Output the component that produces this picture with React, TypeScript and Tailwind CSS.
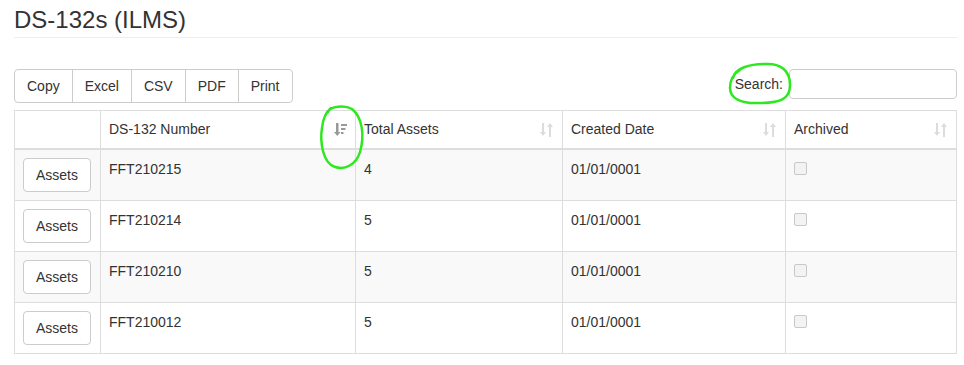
const rows = [
  { num: "FFT210215", total: "4", date: "01/01/0001" },
  { num: "FFT210214", total: "5", date: "01/01/0001" },
  { num: "FFT210210", total: "5", date: "01/01/0001" },
  { num: "FFT210012", total: "5", date: "01/01/0001" },
];

const SortBoth = () => (
  <svg width="13" height="14" viewBox="0 0 13 14" className="absolute right-[9px] top-[12px]">
    <g fill="#dcdcdc">
      <rect x="2" y="0" width="2" height="10" />
      <polygon points="0,9 6,9 3,13" />
      <rect x="9" y="3" width="2" height="11" />
      <polygon points="7,4 13,4 10,0" />
    </g>
  </svg>
);

const SortActive = () => (
  <svg width="13" height="14" viewBox="0 0 13 14" className="absolute right-[8px] top-[12px]">
    <g fill="#999">
      <rect x="2" y="0" width="2.5" height="10" />
      <polygon points="0,9 6.5,9 3.25,13" />
      <rect x="7" y="1" width="6" height="2" />
      <rect x="7" y="5" width="4.5" height="2" />
      <rect x="7" y="9" width="2.5" height="2" />
    </g>
  </svg>
);

// hand-drawn green marks that sit on top of the screenshot
const Marks = () => (
  <svg width="964" height="365" className="pointer-events-none absolute left-0 top-0">
    <g fill="none" stroke="#2ee81f" strokeWidth="2.5" strokeLinecap="round">
      <path d="M328 112 C330 106 345 105 352 109 C362 117 365 135 360 152 C356 165 345 170 335 167 C322 163 320 140 322 128 C323 118 326 112 331 108" />
      <path d="M733 78 C735 68 750 64 765 64 C780 63 790 70 790 85 C790 98 782 103 760 103 C740 104 730 98 730 88 C730 80 733 74 740 70" />
    </g>
  </svg>
);

const th = "relative border border-[#ddd] border-b-2 px-2 pt-2 pb-[9px] text-left font-normal";
const td = "border border-[#ddd] px-2 py-2 align-top";

export default function App() {
  return (
    <div className="relative min-h-[365px] bg-white pl-[14px] pr-[7px] text-[14px] leading-5 text-[#333]" style={{ fontFamily: '"Liberation Sans", Arial, sans-serif' }}>
      <h3 className="border-b border-[#eee] pt-[7px] pb-[4px] text-[24px] leading-[26px]">DS-132s (ILMS)</h3>

      <div className="mt-[31px] flex items-start justify-between">
        <div className="flex">
          {["Copy", "Excel", "CSV", "PDF", "Print"].map((b, i) => (
            <button
              key={b}
              className={
                "h-[34px] border border-[#ccc] bg-white px-3 text-[#333] " +
                (i === 0 ? "rounded-l " : "-ml-px ") +
                (i === 4 ? "rounded-r" : "")
              }
            >
              {b}
            </button>
          ))}
        </div>
        <label className="flex items-center gap-[6px]">
          <span>Search:</span>
          <input className="h-[30px] w-[168px] rounded border border-[#ccc] px-2 outline-none" />
        </label>
      </div>

      <table className="mt-[7px] w-full border-collapse">
        <thead>
          <tr>
            <th className={th + " w-[86px]"}></th>
            <th className={th + " w-[255px]"}>DS-132 Number<SortActive /></th>
            <th className={th + " w-[207px]"}>Total Assets<SortBoth /></th>
            <th className={th + " w-[223px]"}>Created Date<SortBoth /></th>
            <th className={th}>Archived<SortBoth /></th>
          </tr>
        </thead>
        <tbody>
          {rows.map((r, i) => (
            <tr key={r.num} className={i % 2 === 0 ? "bg-[#f9f9f9]" : "bg-white"}>
              <td className={td}>
                <button className="h-[34px] rounded border border-[#ccc] bg-white px-3 text-[#333]">Assets</button>
              </td>
              <td className={td + " pt-[9px]"}>{r.num}</td>
              <td className={td + " pt-[9px]"}>{r.total}</td>
              <td className={td + " pt-[9px]"}>{r.date}</td>
              <td className={td + " pt-[12px]"}>
                <span className="block h-[13px] w-[13px] rounded-[2px] border border-[#c8c8c8] bg-[#f3f3f3]" />
              </td>
            </tr>
          ))}
        </tbody>
      </table>

      <Marks />
    </div>
  );
}
